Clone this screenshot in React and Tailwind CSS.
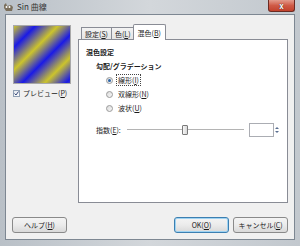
import React from "react";

function Mn({ children }) {
  return <span className="underline underline-offset-1">{children}</span>;
}

function Tab({ label, mn, active }) {
  if (active) {
    return (
      <div className="h-[16px] px-[4px] -mx-[1px] relative z-10 bg-white border border-b-0 border-[#898c95] rounded-t-[2px] flex items-center">
        <span>{label}(<Mn>{mn}</Mn>)</span>
      </div>
    );
  }
  return (
    <div className="h-[13px] px-[3px] bg-gradient-to-b from-[#f3f3f3] to-[#e3e3e3] border border-b-0 border-[#898c95] flex items-center -mr-[1px]">
      <span>{label}(<Mn>{mn}</Mn>)</span>
    </div>
  );
}

function Radio({ checked, label, mn, focus }) {
  return (
    <div className="h-[14px] flex items-center">
      <div className="w-[7px] h-[7px] rounded-full border border-[#9a9a9a] bg-gradient-to-br from-[#dcdcdc] to-[#f7f7f7] flex items-center justify-center">
        {checked && <div className="w-[3px] h-[3px] rounded-full bg-[#2a64a8]" />}
      </div>
      <span className={`ml-[4px] px-[1px] ${focus ? "outline outline-1 outline-dotted outline-[#444]" : ""}`}>
        {label}(<Mn>{mn}</Mn>)
      </span>
    </div>
  );
}

function Button({ children, primary }) {
  return (
    <div
      className={`h-[16px] w-[55px] rounded-[3px] border flex items-center justify-center bg-gradient-to-b from-[#f4f4f4] via-[#ebebeb] to-[#d9d9d9] ${
        primary ? "border-[#3c7fb1] shadow-[inset_0_0_0_1px_#9fd3f2]" : "border-[#8a8a8a]"
      }`}
    >
      {children}
    </div>
  );
}

export default function App() {
  return (
    <div className="w-[300px] h-[246px] flex flex-col bg-gradient-to-r from-[#b9c0c7] via-[#d3d7db] to-[#c2c8ce] text-[7px] leading-[10px] text-[#1a1a1a] font-['Noto_Sans_CJK_JP','Liberation_Sans',sans-serif]">
      {/* title bar */}
      <div className="h-[14px] flex items-start pl-[3px] pr-[5px]">
        <svg width="11" height="9" viewBox="0 0 11 9" className="mt-[3px]">
          <path d="M1 2 L3 0 L4 3 L8 2 L10 4 L9 8 L3 8 L1 5 Z" fill="#7b6f5c" />
          <circle cx="3.5" cy="4" r="1" fill="#fff" />
          <circle cx="6.5" cy="4" r="1" fill="#fff" />
        </svg>
        <span className="ml-[3px] mt-[2px] text-[8px] leading-[10px] text-[#333]">Sin 曲線</span>
        <div className="flex-1" />
        <div className="w-[27px] h-[12px] rounded-b-[3px] border border-t-0 border-[#6b2a22] bg-gradient-to-b from-[#e29a8c] via-[#cf5a46] to-[#c2412c] flex items-center justify-center">
          <span className="text-white font-bold text-[8px] leading-[8px] [text-shadow:0_0_1px_#000]">x</span>
        </div>
      </div>

      {/* client area */}
      <div className="mx-[5px] h-[226px] border border-[#7d8792] bg-[#f0f0f0] flex flex-col">
        <div className="flex pt-[9px] pl-[7px] pr-[6px]">
          {/* preview */}
          <div className="w-[58px] flex flex-col">
            <div className="mt-[1px] h-[59px] border border-[#a9a9a9] bg-[image:repeating-linear-gradient(135deg,#ccc42c_0px,#1a1ae6_15px,#ccc42c_31px)]" />
            <div className="mt-[5px] h-[8px] flex items-center">
              <div className="w-[7px] h-[7px] border border-[#8f9fb3] bg-gradient-to-br from-[#e3e8ee] to-[#fafbfc] flex items-center justify-center">
                <svg width="5" height="5" viewBox="0 0 5 5">
                  <path d="M0.5 2.5 L2 4 L4.5 0.5" stroke="#3a4a7a" strokeWidth="1" fill="none" />
                </svg>
              </div>
              <span className="ml-[3px]">プレビュー(<Mn>P</Mn>)</span>
            </div>
          </div>

          {/* notebook */}
          <div className="ml-[7px] flex-1 flex flex-col">
            <div className="h-[16px] flex items-end pl-[3px]">
              <Tab label="設定" mn="S" />
              <Tab label="色" mn="L" />
              <Tab label="混色" mn="B" active />
            </div>
            <div className="h-[164px] -mt-[1px] border border-[#898c95] bg-white pt-[7px] pl-[7px] pr-[8px]">
              <div className="font-bold">混色設定</div>
              <div className="pl-[10px] mt-[4px]">
                <div className="font-bold">勾配/グラデーション</div>
                <div className="pl-[10px] mt-[2px]">
                  <Radio checked focus label="線形" mn="I" />
                  <Radio label="双線形" mn="N" />
                  <Radio label="波状" mn="U" />
                </div>
                <div className="mt-[8px] h-[14px] flex items-center">
                  <span className="w-[31px]">指数(<Mn>E</Mn>):</span>
                  <div className="flex-1 flex items-center">
                    <div className="w-[55px] h-[2px] border-t border-[#b4b4b4] border-b border-b-white" />
                    <div className="w-[6px] h-[10px] rounded-[1px] border border-[#7a7a7a] bg-gradient-to-r from-[#f6f6f6] to-[#d8d8d8]" />
                    <div className="flex-1 h-[2px] border-t border-[#b4b4b4] border-b border-b-white" />
                  </div>
                  <div className="ml-[5px] w-[30px] h-[14px] flex">
                    <div className="flex-1 border border-[#abadb3] bg-white" />
                    <div className="w-[5px] flex flex-col items-center justify-center gap-[2px]">
                      <div className="w-0 h-0 border-x-[2px] border-x-transparent border-b-[2px] border-b-[#5a6f90]" />
                      <div className="w-0 h-0 border-x-[2px] border-x-transparent border-t-[2px] border-t-[#5a6f90]" />
                    </div>
                  </div>
                </div>
              </div>
            </div>
          </div>
        </div>

        {/* buttons */}
        <div className="mt-[14px] flex pl-[6px] pr-[6px]">
          <Button>ヘルプ(<Mn>H</Mn>)</Button>
          <div className="flex-1" />
          <Button primary>OK(<Mn>O</Mn>)</Button>
          <div className="w-[4px]" />
          <Button>キャンセル(<Mn>C</Mn>)</Button>
        </div>
      </div>
    </div>
  );
}
